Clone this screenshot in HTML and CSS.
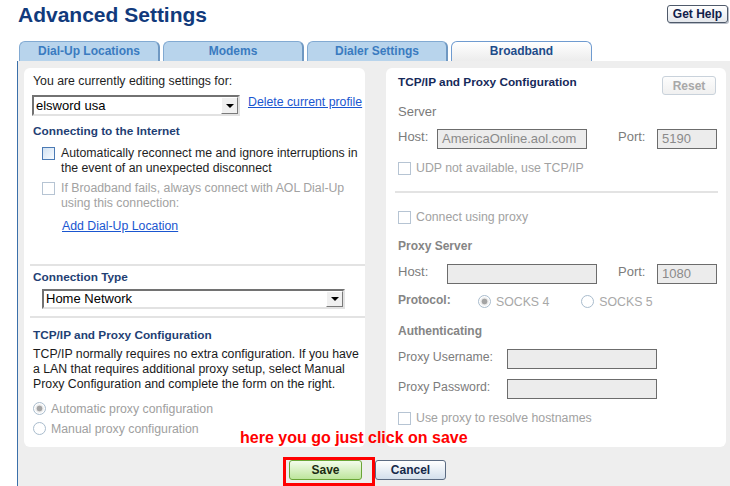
FILE: index.html
```html
<!DOCTYPE html>
<html>
<head>
<meta charset="utf-8">
<title>Advanced Settings</title>
<link rel="stylesheet" href="styles.css">
</head>
<body>
<header class="top">
  <h1 class="title">Advanced Settings</h1>
  <button class="help-btn">Get Help</button>
</header>
<nav class="tabs">
  <div class="tab">Dial-Up Locations</div>
  <div class="tab">Modems</div>
  <div class="tab">Dialer Settings</div>
  <div class="tab active">Broadband</div>
</nav>
<main class="content">
  <div class="panels">
    <section class="panel left">
      <div class="line">You are currently editing settings for:</div>
      <div class="profile-row">
        <div class="select profile-select"><span class="select-value">elsword usa</span><span class="select-arrow"></span></div>
        <a class="link" href="#">Delete current profile</a>
      </div>
      <h2 class="sec-head head-connect">Connecting to the Internet</h2>
      <div class="check-row row-auto"><span class="checkbox on"></span><span>Automatically reconnect me and ignore interruptions in<br>the event of an unexpected disconnect</span></div>
      <div class="check-row row-fail disabled"><span class="checkbox"></span><span>If Broadband fails, always connect with AOL Dial-Up<br>using this connection:</span></div>
      <a class="link add-link" href="#">Add Dial-Up Location</a>
      <div class="sep sep-a"></div>
      <h2 class="sec-head head-type">Connection Type</h2>
      <div class="select type-select"><span class="select-value">Home Network</span><span class="select-arrow"></span></div>
      <div class="sep sep-b"></div>
      <h2 class="sec-head head-tcp">TCP/IP and Proxy Configuration</h2>
      <p class="desc">TCP/IP normally requires no extra configuration. If you have<br>a LAN that requires additional proxy setup, select Manual<br>Proxy Configuration and complete the form on the right.</p>
      <div class="radio-row radio-auto"><span class="radio checked"></span>Automatic proxy configuration</div>
      <div class="radio-row radio-manual"><span class="radio"></span>Manual proxy configuration</div>
    </section>
    <section class="panel right">
      <div class="rhead-row">
        <h2 class="rhead">TCP/IP and Proxy Configuration</h2>
        <button class="reset-btn">Reset</button>
      </div>
      <div class="sub-head sub-server">Server</div>
      <div class="field-row row-host1">
        <span class="flabel w-host1">Host:</span>
        <div class="finput w-host">AmericaOnline.aol.com</div>
        <span class="flabel w-port port1">Port:</span>
        <div class="finput w-portin">5190</div>
      </div>
      <div class="check-row rcheck row-udp disabled"><span class="checkbox"></span><span>UDP not available, use TCP/IP</span></div>
      <div class="sep rsep"></div>
      <div class="check-row rcheck row-proxy disabled"><span class="checkbox"></span><span>Connect using proxy</span></div>
      <div class="sub-head bold sub-proxy">Proxy Server</div>
      <div class="field-row row-host2">
        <span class="flabel w-host2">Host:</span>
        <div class="finput w-host"></div>
        <span class="flabel w-port port2">Port:</span>
        <div class="finput w-portin">1080</div>
      </div>
      <div class="proto-row">
        <span class="proto-label">Protocol:</span>
        <span class="radio checked"></span><span class="proto-opt">SOCKS 4</span>
        <span class="radio socks5"></span><span class="proto-opt">SOCKS 5</span>
      </div>
      <div class="sub-head bold sub-auth">Authenticating</div>
      <div class="field-row row-user">
        <span class="flabel small w-cred">Proxy Username:</span>
        <div class="finput w-host"></div>
      </div>
      <div class="field-row row-pass">
        <span class="flabel small w-cred">Proxy Password:</span>
        <div class="finput w-host"></div>
      </div>
      <div class="check-row rcheck row-resolve disabled"><span class="checkbox"></span><span>Use proxy to resolve hostnames</span></div>
    </section>
  </div>
  <div class="actions">
    <div class="highlight"><button class="btn save">Save</button></div>
    <button class="btn cancel">Cancel</button>
  </div>
  <div class="annotation">here you go just click on save</div>
</main>
</body>
</html>
```
FILE: styles.css
```css
* { box-sizing: border-box; }
html, body { margin: 0; padding: 0; }
body {
  width: 730px;
  height: 486px;
  overflow: hidden;
  background: #fff;
  font-family: "Liberation Sans", Arial, Helvetica, sans-serif;
  font-size: 12.3px;
  color: #1e1e1e;
}
h1, h2, p { margin: 0; }

/* header */
.top {
  height: 41px;
  display: flex;
  justify-content: space-between;
  align-items: flex-start;
  padding: 3px 2px 0 18px;
}
.title {
  font-size: 21px;
  line-height: 24px;
  font-weight: bold;
  color: #113a7c;
}
.help-btn {
  margin-top: 2px;
  width: 61px;
  height: 18px;
  padding: 0;
  font: bold 12px "Liberation Sans", Arial, sans-serif;
  color: #10204a;
  border: 1px solid #4f5a6a;
  border-radius: 3px;
  background: linear-gradient(#ffffff, #e4e7ec);
  box-shadow: 1px 1px 0 #b8bec8;
}

/* tabs */
.tabs {
  display: flex;
  gap: 3px;
  padding-left: 19px;
  height: 20px;
}
.tab {
  width: 141px;
  height: 20px;
  border: 1px solid #82aad2;
  border-right: 2px solid #6f98c2;
  border-bottom: 0;
  border-radius: 6px 6px 0 0;
  background: #b8d4ec;
  color: #3a7bc0;
  font-weight: bold;
  font-size: 12px;
  line-height: 19px;
  text-align: center;
}
.tab.active {
  background: linear-gradient(#ffffff, #ececec);
  color: #1e4c8a;
  border-color: #6f9bd0;
  border-right-width: 1px;
}

/* content */
.content {
  position: relative;
  margin-left: 17px;
  height: 425px;
  border-left: 1px solid #3b70aa;
  background: #eeeeee;
  padding: 7px 4px 0 6px;
}
.panels {
  display: flex;
  gap: 21px;
  height: 379px;
}
.panel {
  background: #fff;
  border-radius: 6px;
}
.panel.left {
  width: 341px;
  padding: 6px 0 0 9px;
}
.panel.right {
  width: 340px;
  padding: 7px 10px 0 12px;
}

.line { line-height: 15px; }

.profile-row {
  display: flex;
  align-items: flex-start;
  margin-top: 6px;
  margin-left: -1px;
  gap: 8px;
}
.select {
  display: flex;
  height: 21px;
  border: 2px solid;
  border-color: #727272 #e2e2e2 #e2e2e2 #727272;
  background: #fff;
}
.profile-select { width: 208px; }
.select-value {
  flex: 1;
  padding-left: 2px;
  font-size: 13px;
  line-height: 17px;
  color: #000;
}
.select-arrow {
  width: 17px;
  display: flex;
  align-items: center;
  justify-content: center;
  background: #f0f0f0;
  border: 1px solid;
  border-color: #ffffff #7a7a7a #7a7a7a #ffffff;
}
.select-arrow::after {
  content: "";
  border-left: 4px solid transparent;
  border-right: 4px solid transparent;
  border-top: 4px solid #000;
}
.link {
  color: #1a56d0;
  text-decoration: underline;
  line-height: 15px;
}

.sec-head {
  font-size: 11.8px;
  line-height: 15px;
  font-weight: bold;
  color: #1f3f74;
}
.head-connect { margin-top: 8px; }
.head-type { margin-top: 4px; }
.head-tcp { margin-top: 10px; }

.check-row {
  display: flex;
  align-items: flex-start;
  gap: 6px;
  line-height: 15px;
  padding-left: 9px;
}
.row-auto { margin-top: 7px; }
.row-fail { margin-top: 5px; }
.check-row.disabled { color: #a2a2a2; }
.checkbox {
  flex: none;
  width: 13px;
  height: 13px;
  margin-top: 1px;
  border: 1px solid #b6c4d3;
  background: #fff;
}
.checkbox.on {
  border-color: #4b7ab4;
  background: linear-gradient(135deg, #d2e2f2, #f7fbff);
}
.add-link {
  display: block;
  width: max-content;
  margin-top: 8px;
  margin-left: 29px;
}

.sep {
  height: 2px;
  background: #e3e3e3;
}
.sep-a { margin-top: 30px; margin-left: -3px; }
.sep-b { margin-top: 7px; margin-left: -3px; }

.type-select {
  margin-top: 4px;
  margin-left: 9px;
  width: 303px;
  height: 20px;
}
.type-select .select-value { line-height: 16px; }

.desc {
  margin-top: 4px;
  line-height: 15px;
  color: #1a1a1a;
}

.radio-row {
  display: flex;
  align-items: center;
  gap: 5px;
  height: 15px;
  color: #a0a0a0;
}
.radio-auto { margin-top: 9px; }
.radio-manual { margin-top: 5px; }
.radio {
  flex: none;
  width: 13px;
  height: 13px;
  border-radius: 50%;
  border: 1px solid #a9bccd;
  background: #fff;
}
.radio.checked {
  background: radial-gradient(circle, #a4a4a4 0, #a4a4a4 2.5px, #e6e6e6 3.2px, #fff 5px);
}

/* right panel */
.rhead-row {
  display: flex;
  justify-content: space-between;
  align-items: flex-start;
  height: 20px;
}
.rhead {
  font-size: 11.8px;
  line-height: 15px;
  font-weight: bold;
  color: #16295a;
}
.reset-btn {
  margin-top: 1px;
  width: 54px;
  height: 19px;
  padding: 0;
  border: 1px solid #c9d2db;
  border-radius: 3px;
  background: linear-gradient(#fdfdfd, #f0f0f0);
  color: #a8a8a8;
  font: bold 12px "Liberation Sans", Arial, sans-serif;
}
.sub-head {
  font-size: 13px;
  line-height: 15px;
  color: #7a7a7a;
}
.sub-head.bold { font-size: 12px; font-weight: bold; color: #858585; }
.sub-server { margin-top: 9px; }
.sub-proxy { margin-top: 14px; }
.sub-auth { margin-top: 16px; }

.field-row {
  display: flex;
  align-items: flex-start;
  height: 20px;
}
.row-host1 { margin-top: 10px; }
.row-host2 { margin-top: 10px; }
.row-user { margin-top: 10px; }
.row-pass { margin-top: 10px; }
.flabel {
  flex: none;
  font-size: 13px;
  line-height: 16px;
  color: #7c7c7c;
}
.flabel.small { font-size: 12.3px; line-height: 17px; }
.w-host1 { width: 39px; }
.w-host2 { width: 49px; }
.w-port { width: 39px; }
.port1 { margin-left: 31px; }
.port2 { margin-left: 21px; }
.w-cred { width: 109px; }
.finput {
  flex: none;
  height: 20px;
  border: 1px solid #6c6c6c;
  background: #ececec;
  font-size: 13px;
  line-height: 18px;
  color: #8a8a8a;
  padding: 0 4px;
}
.w-host { width: 150px; }
.w-portin { width: 60px; }

.rcheck { padding-left: 0; gap: 5px; }
.row-udp { margin-top: 12px; }
.row-proxy { margin-top: 17px; }
.row-resolve { margin-top: 12px; }
.rsep { margin-top: 15px; margin-left: -3px; margin-right: -2px; }

.proto-row {
  display: flex;
  align-items: center;
  height: 15px;
  margin-top: 9px;
}
.proto-label {
  width: 80px;
  font-size: 12px;
  font-weight: bold;
  color: #858585;
  margin-top: -2px;
}
.proto-opt {
  margin-left: 5px;
  color: #a8a8a8;
  font-size: 12.3px;
  margin-top: 2px;
}
.proto-row .radio { margin-top: 2px; }
.socks5 { margin-left: 32px; }

/* actions */
.actions {
  display: flex;
  align-items: flex-start;
  margin-top: 10px;
  padding-left: 259px;
}
.highlight {
  border: 3px solid #ff0000;
  padding: 0 10px 3px 3px;
}
.btn {
  height: 20px;
  padding: 0;
  font: bold 12px "Liberation Sans", Arial, sans-serif;
  border-radius: 3px;
}
.save {
  width: 73px;
  border: 1px solid #6aa536;
  background: linear-gradient(#f4fcec, #bde59c);
  color: #1b2a12;
}
.cancel {
  width: 71px;
  margin-top: 3px;
  border: 1px solid #5b6b82;
  background: linear-gradient(#ffffff, #d3dfec);
  color: #14284a;
}

.annotation {
  position: absolute;
  left: 222px;
  top: 368px;
  font-size: 16px;
  line-height: 18px;
  font-weight: bold;
  color: #ff0000;
  white-space: nowrap;
}
```
